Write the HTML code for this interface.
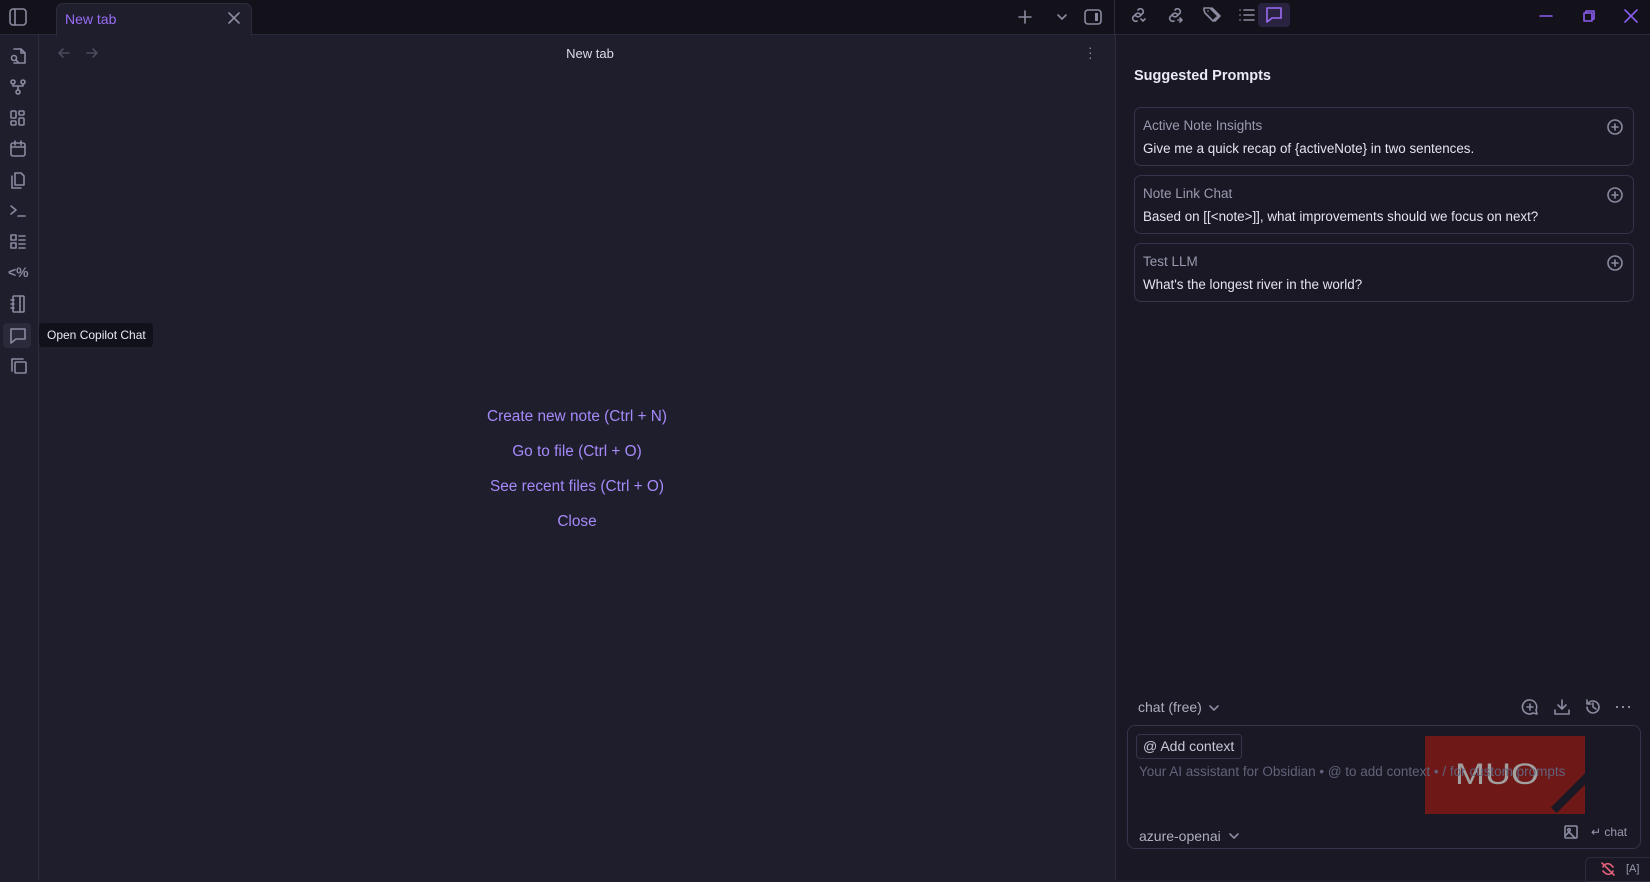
<!DOCTYPE html>
<html><head><meta charset="utf-8"><style>
*{box-sizing:border-box;margin:0;padding:0}
body{width:1650px;height:880px;background:#1e1e2d;font-family:"Liberation Sans",sans-serif;position:relative;overflow:hidden;color:#dcdcea}
.abs{position:absolute}
svg{fill:none;stroke:#8a8aa0;stroke-width:1.6;stroke-linecap:round;stroke-linejoin:round}
.top{left:0;top:0;width:1650px;height:35px;background:#13121b;border-bottom:1px solid #2a2a3a}
.rib{left:0;top:35px;width:39px;height:845px;background:#1e1e2d;border-right:1px solid #2c2c3c}
.tab{left:56px;top:3px;width:196px;height:33px;background:#1e1e2d;border:1px solid #2c2c3c;border-bottom:none;border-radius:7px 7px 0 0}
.right{left:1115px;top:35px;width:535px;height:845px;background:#191824;border-left:1px solid #2c2c3c}
.card{left:1134px;width:500px;height:59px;border:1px solid #34344a;border-radius:7px}
.card .t{position:absolute;left:8px;top:10px;font-size:13.5px;color:#9a9ab0}
.card .d{position:absolute;left:8px;top:33px;font-size:13.4px;color:#e4e4f0}
.card svg{position:absolute;right:10px;top:11px}
.link{width:300px;left:427px;text-align:center;font-size:15.4px;color:#a68af9}
</style></head><body>
<div class="abs top"></div>
<svg class="abs" style="left:8px;top:7px" width="20" height="20" viewBox="0 0 20 20"><rect x="2" y="2" width="16" height="16" rx="3"/><path d="M7 2v16"/></svg>
<div class="abs tab"></div>
<div class="abs" style="left:65px;top:11px;font-size:14px;color:#9a6cf5">New tab</div>
<svg class="abs" style="left:228px;top:12px" width="12" height="12" viewBox="0 0 12 12"><path d="M1 1l10 10M11 1L1 11"/></svg>
<svg class="abs" style="left:1017px;top:9px" width="16" height="16" viewBox="0 0 16 16"><path d="M8 2v12M2 8h12"/></svg>
<svg class="abs" style="left:1055px;top:10px" width="14" height="14" viewBox="0 0 14 14"><path d="M3 5l4 4 4-4"/></svg>
<svg class="abs" style="left:1083px;top:7px" width="20" height="20" viewBox="0 0 20 20"><rect x="2" y="3" width="16" height="14" rx="3"/><rect x="12" y="6" width="3" height="8" fill="#8a8aa0" stroke="none"/></svg>
<div class="abs rib"></div>
<div class="abs right"></div>
<div class="abs" style="left:1114px;top:0;width:1px;height:35px;background:#2c2c3c"></div>
<svg class="abs" style="left:8px;top:46px" width="20" height="20" viewBox="0 0 20 20"><path d="M6 3h7l4 4v10H6M13 3v4h4"/><circle cx="6" cy="12" r="2.5"/><path d="M8 14l2 2"/></svg>
<svg class="abs" style="left:8px;top:77px" width="20" height="20" viewBox="0 0 20 20"><circle cx="5" cy="5" r="2"/><circle cx="15" cy="5" r="2"/><circle cx="10" cy="15" r="2"/><path d="M5 7v2h10V7M10 9v4"/></svg>
<svg class="abs" style="left:8px;top:108px" width="20" height="20" viewBox="0 0 20 20"><rect x="3" y="3" width="5" height="7" rx="1"/><rect x="11" y="3" width="5" height="4" rx="1"/><rect x="3" y="13" width="5" height="4" rx="1"/><rect x="11" y="10" width="5" height="7" rx="1"/></svg>
<svg class="abs" style="left:8px;top:139px" width="20" height="20" viewBox="0 0 20 20"><rect x="3" y="4" width="14" height="13" rx="2"/><path d="M3 8h14M7 2v4M13 2v4"/></svg>
<svg class="abs" style="left:8px;top:170px" width="20" height="20" viewBox="0 0 20 20"><path d="M7 3h6l3 3v9H7zM4 6v12h9"/></svg>
<svg class="abs" style="left:8px;top:201px" width="20" height="20" viewBox="0 0 20 20"><path d="M3 5l5 4-5 4M10 15h7"/></svg>
<svg class="abs" style="left:8px;top:232px" width="20" height="20" viewBox="0 0 20 20"><rect x="3" y="3" width="5" height="5"/><rect x="3" y="11" width="5" height="5"/><path d="M11 4h6M11 8h6M11 12h6M11 16h6"/></svg>
<div class="abs" style="left:8px;top:264px;font-size:14px;color:#8a8aa0;font-weight:bold">&lt;%</div>
<svg class="abs" style="left:8px;top:294px" width="20" height="20" viewBox="0 0 20 20"><rect x="5" y="2" width="11" height="16" rx="1"/><path d="M12 2v16M3 6h3M3 10h3M3 14h3"/></svg>
<div class="abs" style="left:3px;top:323px;width:28px;height:25px;background:#2a2a3a;border-radius:4px"></div>
<svg class="abs" style="left:8px;top:325px" width="20" height="20" viewBox="0 0 20 20"><path d="M3 4h14v10H8l-5 4z"/></svg>
<svg class="abs" style="left:8px;top:356px" width="20" height="20" viewBox="0 0 20 20"><rect x="7" y="6" width="11" height="11" rx="1"/><path d="M4 15V3h11"/></svg>
<div class="abs" style="left:39px;top:323px;width:114px;height:24px;background:#111119;border-radius:4px;"></div>
<div class="abs" style="left:47px;top:328px;font-size:12px;color:#eaeaf4">Open Copilot Chat</div>
<svg class="abs" style="left:56px;top:45px" width="16" height="16" viewBox="0 0 16 16"><path d="M13 8H3M7 4L3 8l4 4" stroke="#4a4a5c"/></svg>
<svg class="abs" style="left:84px;top:45px" width="16" height="16" viewBox="0 0 16 16"><path d="M3 8h10M9 4l4 4-4 4" stroke="#4a4a5c"/></svg>
<div class="abs" style="left:540px;top:46px;width:100px;text-align:center;font-size:13px;color:#dcdcea">New tab</div>
<div class="abs" style="left:1088px;top:45px;font-size:14px;color:#8a8aa0;line-height:5px">·<br>·<br>·</div>
<div class="abs link" style="top:408px">Create new note (Ctrl + N)</div>
<div class="abs link" style="top:443px">Go to file (Ctrl + O)</div>
<div class="abs link" style="top:478px">See recent files (Ctrl + O)</div>
<div class="abs link" style="top:513px">Close</div>
<svg class="abs" style="left:1128px;top:5px" width="20" height="20" viewBox="0 0 20 20"><path d="M8 11a3 3 0 004 0l3-3a3 3 0 00-4-4l-1 1M12 9a3 3 0 00-4 0l-3 3a3 3 0 004 4M13 14l2 2 2-2"/></svg>
<svg class="abs" style="left:1165px;top:5px" width="20" height="20" viewBox="0 0 20 20"><path d="M8 11a3 3 0 004 0l3-3a3 3 0 00-4-4l-1 1M12 9a3 3 0 00-4 0l-3 3a3 3 0 004 4M13 15h4M15 13l2 2-2 2"/></svg>
<svg class="abs" style="left:1202px;top:5px" width="20" height="20" viewBox="0 0 20 20"><path d="M2 5V3h6l8 8-5 5-8-8zM6 6h.1M10 3l8 8-5 5"/></svg>
<svg class="abs" style="left:1237px;top:5px" width="20" height="20" viewBox="0 0 20 20"><path d="M7 5h10M7 10h10M7 15h10M3 5h.1M3 10h.1M3 15h.1"/></svg>
<div class="abs" style="left:1258px;top:3px;width:32px;height:24px;background:#2a2340;border-radius:4px"></div>
<svg class="abs" style="left:1264px;top:5px" width="20" height="20" viewBox="0 0 20 20"><path d="M3 3h14v10H8l-5 4z" stroke="#9a6cf5"/></svg>
<svg class="abs" style="left:1538px;top:8px" width="16" height="16" viewBox="0 0 16 16"><path d="M2 8h12" stroke="#8a5cf0"/></svg>
<svg class="abs" style="left:1581px;top:8px" width="16" height="16" viewBox="0 0 16 16"><rect x="3" y="5" width="8" height="8" stroke="#8a5cf0"/><path d="M5 5V3h8v8h-2" stroke="#8a5cf0"/></svg>
<svg class="abs" style="left:1623px;top:8px" width="16" height="16" viewBox="0 0 16 16"><path d="M2 2l12 12M14 2L2 14" stroke="#8a5cf0"/></svg>
<div class="abs" style="left:1134px;top:68px;font-size:14.5px;font-weight:bold;color:#eaeaf4">Suggested Prompts</div>
<div class="abs card" style="top:107px"><div class="t">Active Note Insights</div><div class="d">Give me a quick recap of {activeNote} in two sentences.</div><svg width="16" height="16" viewBox="0 0 16 16"><circle cx="8" cy="8" r="7"/><path d="M8 5v6M5 8h6"/></svg></div>
<div class="abs card" style="top:175px"><div class="t">Note Link Chat</div><div class="d">Based on [[&lt;note&gt;]], what improvements should we focus on next?</div><svg width="16" height="16" viewBox="0 0 16 16"><circle cx="8" cy="8" r="7"/><path d="M8 5v6M5 8h6"/></svg></div>
<div class="abs card" style="top:243px"><div class="t">Test LLM</div><div class="d">What's the longest river in the world?</div><svg width="16" height="16" viewBox="0 0 16 16"><circle cx="8" cy="8" r="7"/><path d="M8 5v6M5 8h6"/></svg></div>
<div class="abs" style="left:1138px;top:699px;font-size:14px;color:#aeaec0">chat (free)</div>
<svg class="abs" style="left:1207px;top:701px" width="14" height="14" viewBox="0 0 14 14"><path d="M3 5l4 4 4-4"/></svg>
<svg class="abs" style="left:1521px;top:698px" width="18" height="18" viewBox="0 0 18 18"><path d="M9 2a7 7 0 016 10l1 4-4-1A7 7 0 119 2zM9 6v6M6 9h6"/></svg>
<svg class="abs" style="left:1553px;top:698px" width="18" height="18" viewBox="0 0 18 18"><path d="M9 2v9M5 7l4 4 4-4M2 12v4h14v-4"/></svg>
<svg class="abs" style="left:1584px;top:698px" width="18" height="18" viewBox="0 0 18 18"><path d="M3 9a6 6 0 106-6 6 6 0 00-5 2.5M3 2v4h4M9 5v4l3 2"/></svg>
<svg class="abs" style="left:1614px;top:699px" width="18" height="16" viewBox="0 0 18 16"><circle cx="3" cy="8" r="1" fill="#aeaec0" stroke="none"/><circle cx="9" cy="8" r="1" fill="#aeaec0" stroke="none"/><circle cx="15" cy="8" r="1" fill="#aeaec0" stroke="none"/></svg>
<div class="abs" style="left:1127px;top:725px;width:514px;height:124px;border:1px solid #34344a;border-radius:8px"></div>
<div class="abs" style="left:1136px;top:734px;width:106px;height:25px;border:1px solid #34344a;border-radius:4px;font-size:14px;color:#c8c8d8;padding:3px 0 0 6px">@ Add context</div>
<div class="abs" style="left:1425px;top:736px;width:160px;height:78px;background:#6e1818"></div>
<div class="abs" style="left:1545px;top:785px;width:60px;height:8px;background:#191824;transform:rotate(-45deg)"></div>
<div class="abs" style="left:1455px;top:758px;font-size:30px;color:#a0a0a0;transform:scaleX(1.2);transform-origin:left">MUO</div>
<div class="abs" style="left:1139px;top:764px;font-size:13.5px;color:#62627a">Your AI assistant for Obsidian • @ to add context • / for custom prompts</div>
<div class="abs" style="left:1139px;top:828px;font-size:14px;color:#aeaec0">azure-openai</div>
<svg class="abs" style="left:1227px;top:829px" width="14" height="14" viewBox="0 0 14 14"><path d="M3 5l4 4 4-4"/></svg>
<svg class="abs" style="left:1563px;top:824px" width="16" height="16" viewBox="0 0 16 16"><rect x="2" y="2" width="12" height="12" rx="1"/><circle cx="6" cy="6" r="1.3"/><path d="M2 12l4-4 6 6"/></svg>
<div class="abs" style="left:1591px;top:825px;font-size:12px;color:#9a9ab0">↵ chat</div>
<div class="abs" style="left:1585px;top:857px;width:70px;height:25px;background:#191824;border:1px solid #2c2c3c;border-radius:6px 0 0 0"></div>
<svg class="abs" style="left:1600px;top:861px" width="16" height="16" viewBox="0 0 16 16"><path d="M2 2l12 12M3 6a5 5 0 018-2l2 2M13 10a5 5 0 01-8 2l-2-2" stroke="#e0607a"/></svg>
<div class="abs" style="left:1626px;top:863px;font-size:11px;color:#9a9ab0">[A]</div>
</body></html>
